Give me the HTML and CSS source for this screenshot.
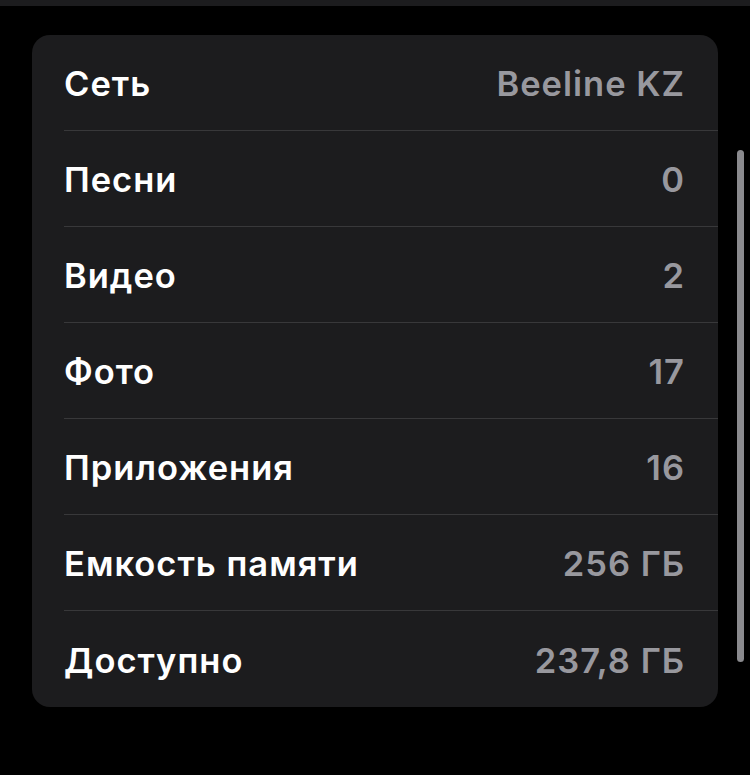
FILE: index.html
```html
<!DOCTYPE html>
<html lang="ru">
<head>
<meta charset="utf-8">
<link rel="stylesheet" href="styles.css">
</head>
<body>
<div class="topbar"></div>
<div class="stage">
  <div class="card">
    <div class="row"><span class="label">Сеть</span><span class="value">Beeline KZ</span></div>
    <div class="row"><span class="label">Песни</span><span class="value">0</span></div>
    <div class="row"><span class="label">Видео</span><span class="value">2</span></div>
    <div class="row"><span class="label">Фото</span><span class="value">17</span></div>
    <div class="row"><span class="label">Приложения</span><span class="value">16</span></div>
    <div class="row"><span class="label">Емкость памяти</span><span class="value">256 ГБ</span></div>
    <div class="row"><span class="label">Доступно</span><span class="value">237,8 ГБ</span></div>
  </div>
  <div class="scrollbar"></div>
</div>
</body>
</html>
```
FILE: styles.css
```css
html, body {
  margin: 0;
  padding: 0;
  background: #000;
  width: 750px;
  height: 775px;
  overflow: hidden;
  font-family: Inter, "Liberation Sans", sans-serif;
}
.topbar {
  height: 6px;
  background: #1c1c1e;
}
.stage {
  position: relative;
  padding: 29px 32px 0 32px;
}
.card {
  width: 686px;
  background: #1c1c1e;
  border-radius: 18px;
  overflow: hidden;
}
.row {
  height: 96px;
  margin-left: 32px;
  padding-right: 33px;
  padding-top: 2px;
  box-sizing: border-box;
  display: flex;
  align-items: center;
  justify-content: space-between;
  border-bottom: 1px solid #38383a;
}
.row:last-child {
  border-bottom: none;
}
.label {
  color: #fff;
  font-size: 34.5px;
  font-weight: 600;
  letter-spacing: 1px;
}
.value {
  color: #98989e;
  font-size: 34.5px;
  font-weight: 600;
  letter-spacing: 1px;
}
.scrollbar {
  position: absolute;
  left: 737px;
  top: 144px;
  width: 7px;
  height: 512px;
  border-radius: 4px;
  background: #8a8a8e;
}
```
